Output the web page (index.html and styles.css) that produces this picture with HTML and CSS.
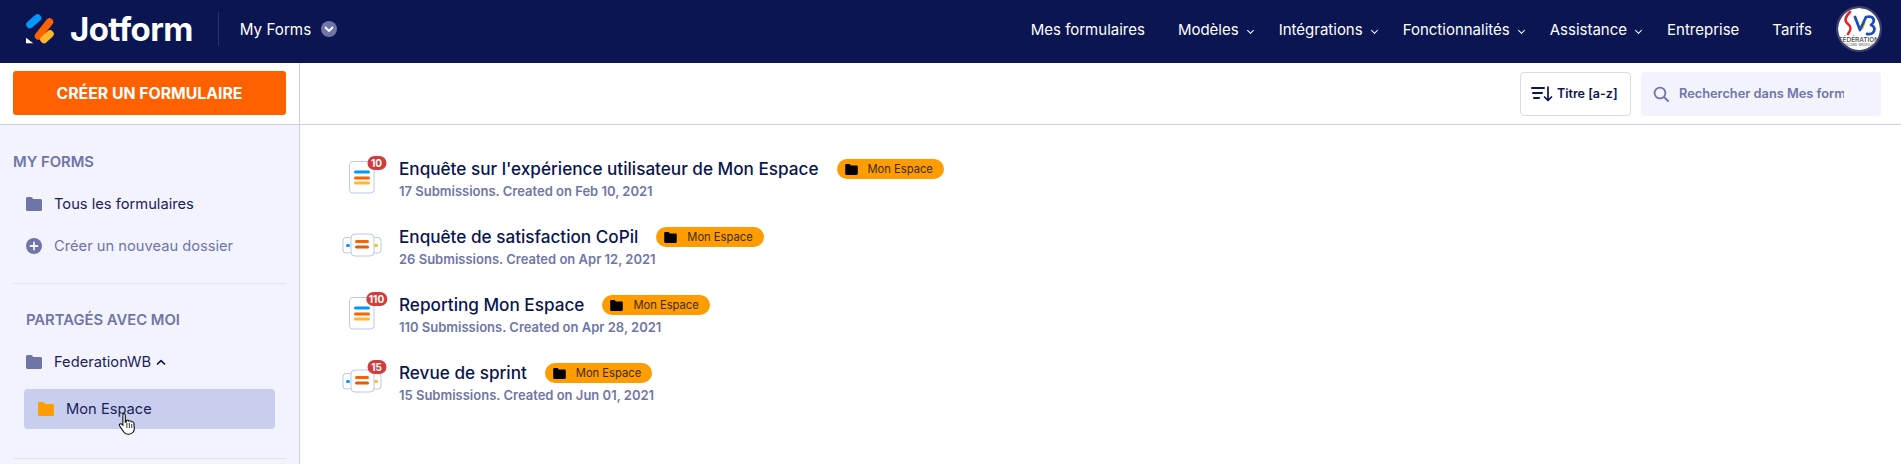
FILE: index.html
```html
<!DOCTYPE html>
<html lang="fr">
<head>
  <meta charset="UTF-8" />
  <title>My Forms - Jotform</title>
  <link rel="stylesheet" href="styles.css">
</head>
<body>

  <svg class="defs" width="0" height="0">
    <symbol id="folder" viewBox="0 0 16 14">
      <path d="M0 1.500C0 .7.7 0 1.500 0h3.400c.5 0 .9.2 1.200.6L7.200 2h7.300c.8 0 1.500.7 1.500 1.500v9c0 .8-.7 1.500-1.500 1.500h-13C.7 14 0 13.300 0 12.500z" fill="currentColor"/>
    </symbol>
    <symbol id="form-card" viewBox="0 0 36 36">
      <rect x="7.500" y=".5" width="24.500" height="31.500" rx="3.500" fill="#fff" stroke="#b9c8ea"/>
      <rect x="12" y="9.500" width="16" height="3" rx="1.500" fill="#0099ff"/>
      <rect x="12" y="15.500" width="16" height="3" rx="1.500" fill="#ff6100"/>
      <rect x="12" y="20.500" width="16" height="3" rx="1.500" fill="#ffb629"/>
    </symbol>
    <symbol id="form-cards" viewBox="0 0 40 30">
      <rect x="1" y="5.500" width="9" height="15.500" rx="3" fill="#fff" stroke="#b9c8ea"/>
      <rect x="30.500" y="5.500" width="8.500" height="15.500" rx="3" fill="#fff" stroke="#b9c8ea"/>
      <rect x="4" y="12" width="4" height="3" rx="1.500" fill="#0099ff"/>
      <rect x="32" y="12" width="4" height="3" rx="1.500" fill="#ffb629"/>
      <rect x="9" y="2" width="23" height="22" rx="4" fill="#fff" stroke="#b9c8ea"/>
      <rect x="13" y="8" width="14" height="3" rx="1.500" fill="#ff6100"/>
      <rect x="13" y="13.500" width="14" height="3" rx="1.500" fill="#e8590c"/>
    </symbol>
  </svg>

  <!-- Barre du haut -->
  <header class="topbar">
    <a class="logo">
      <svg class="logo-mark" width="28" height="31" viewBox="0 0 28 31">
        <g fill="none" stroke-width="7.500" stroke-linecap="round">
          <path d="M4 10.500 11.500 4" stroke="#0099ff"/>
          <path d="M12.500 22 23.500 8" stroke="#ff6100"/>
          <path d="M18 25.500 24 20" stroke="#ffb629"/>
        </g>
        <path d="M0 23.700v5.600h7.300z" fill="#fff"/>
      </svg>
      <span class="logo-text">Jotform</span>
    </a>
    <span class="topbar-sep"></span>
    <a class="myforms">My Forms</a>
    <span class="myforms-arrow">
      <svg width="10" height="7" viewBox="0 0 10 7"><path d="M1.500 1.500 5 5l3.500-3.500" fill="none" stroke="#fff" stroke-width="1.800" stroke-linecap="round" stroke-linejoin="round"/></svg>
    </span>

    <nav class="nav">
      <a class="nav-item">Mes formulaires</a>
      <a class="nav-item has-menu">Modèles</a>
      <a class="nav-item has-menu">Intégrations</a>
      <a class="nav-item has-menu">Fonctionnalités</a>
      <a class="nav-item has-menu">Assistance</a>
      <a class="nav-item">Entreprise</a>
      <a class="nav-item">Tarifs</a>
    </nav>

    <div class="avatar">
      <svg width="42" height="42" viewBox="0 0 42 42">
        <circle cx="21" cy="21" r="21" fill="#fff"/>
        <path d="M12 4C7 9 6 13 10 16c4 3 3 6 0 10" fill="none" stroke="#e0262c" stroke-width="2.600" stroke-linecap="round"/>
        <path d="M24 20l2-5" stroke="#f5c400" stroke-width="3" stroke-linecap="round"/>
        <path d="M17 9l5 13 6-13c8-2 10 4 5 8 6 2 4 10-4 9" fill="none" stroke="#1d4fb8" stroke-width="2.800" stroke-linecap="round" stroke-linejoin="round"/>
        <text x="21" y="33.500" text-anchor="middle" class="avatar-text">FÉDÉRATION</text>
        <text x="21" y="37.500" text-anchor="middle" class="avatar-sub">WALLONIE-BRUXELLES</text>
      </svg>
    </div>
  </header>

  <div class="page">
    <!-- Colonne de gauche -->
    <aside class="sidebar">
      <div class="create-box">
        <button class="create-btn">CRÉER UN FORMULAIRE</button>
      </div>

      <section class="side-section">
        <h3 class="side-title">MY FORMS</h3>
        <a class="side-item">
          <svg class="side-icon"><use href="#folder"/></svg>Tous les formulaires
        </a>
        <a class="side-item muted">
          <svg class="side-icon" viewBox="0 0 16 16"><circle cx="8" cy="8" r="8" fill="currentColor"/><path d="M8 4.500v7M4.500 8h7" stroke="#f3f3fe" stroke-width="1.800" stroke-linecap="round"/></svg>Créer un nouveau dossier
        </a>
      </section>

      <section class="side-section shared">
        <h3 class="side-title">PARTAGÉS AVEC MOI</h3>
        <a class="side-item parent">
          <svg class="side-icon"><use href="#folder"/></svg>FederationWB
          <svg class="side-chevron" width="10" height="7" viewBox="0 0 10 7"><path d="M1.500 5 5 1.700 8.500 5" fill="none" stroke="#0a1551" stroke-width="1.700" stroke-linecap="round" stroke-linejoin="round"/></svg>
        </a>
        <a class="side-item selected">
          <svg class="side-icon"><use href="#folder"/></svg>Mon Espace
          <svg class="hand" width="20" height="24" viewBox="0 0 18 24" preserveAspectRatio="none">
            <path d="M5 1.500c1 0 1.600.7 1.600 1.700v7l1-.4V8.500c1-.7 2-.3 2.200.6.900-.6 2-.2 2.200.8 1-.5 2.200 0 2.300 1.200l.4 5.200c.1 2.700-1.600 5.900-4.700 5.900H9c-2 0-3.200-1-4-2.500l-3.600-6c-.8-1.300.9-2.700 2-1.500l1 1.100V3.200c0-1 .6-1.700 1.600-1.700z" fill="#fff" stroke="#111" stroke-width="1"/>
            <path d="M8 11v5M10.200 11v5M12.400 12v4" stroke="#111" stroke-width=".8"/>
          </svg>
        </a>
      </section>
    </aside>

    <!-- Contenu principal -->
    <main class="main">
      <div class="toolbar">
        <button class="sort-btn">
          <svg width="22" height="18" viewBox="0 0 22 18"><path d="M1 3h12M2 8h9M3 13h5" stroke="#0a1551" stroke-width="2" stroke-linecap="round"/><path d="M17 2v13M13.500 12l3.500 3.500 3.500-3.500" fill="none" stroke="#0a1551" stroke-width="1.700" stroke-linecap="round" stroke-linejoin="round"/></svg>
          Titre [a-z]
        </button>
        <div class="search">
          <svg width="16" height="16" viewBox="0 0 16 16"><circle cx="7" cy="7" r="5.400" fill="none" stroke="#6f76a7" stroke-width="1.800"/><path d="m11 11 4 4" stroke="#6f76a7" stroke-width="1.800" stroke-linecap="round"/></svg>
          <input class="search-input" type="text" placeholder="Rechercher dans Mes formulaires">
        </div>
      </div>

      <ul class="form-list">
        <li class="form-row">
          <div class="form-icon"><svg class="icon-card"><use href="#form-card"/></svg><span class="badge">10</span></div>
          <div>
            <div class="form-head"><span class="form-title">Enquête sur l'expérience utilisateur de Mon Espace</span><span class="tag"><svg class="tag-icon"><use href="#folder"/></svg>Mon Espace</span></div>
            <div class="form-meta">17 Submissions. Created on Feb 10, 2021</div>
          </div>
        </li>
        <li class="form-row">
          <div class="form-icon"><svg class="icon-cards"><use href="#form-cards"/></svg></div>
          <div>
            <div class="form-head"><span class="form-title">Enquête de satisfaction CoPil</span><span class="tag"><svg class="tag-icon"><use href="#folder"/></svg>Mon Espace</span></div>
            <div class="form-meta">26 Submissions. Created on Apr 12, 2021</div>
          </div>
        </li>
        <li class="form-row">
          <div class="form-icon"><svg class="icon-card"><use href="#form-card"/></svg><span class="badge">110</span></div>
          <div>
            <div class="form-head"><span class="form-title">Reporting Mon Espace</span><span class="tag"><svg class="tag-icon"><use href="#folder"/></svg>Mon Espace</span></div>
            <div class="form-meta">110 Submissions. Created on Apr 28, 2021</div>
          </div>
        </li>
        <li class="form-row">
          <div class="form-icon"><svg class="icon-cards"><use href="#form-cards"/></svg><span class="badge">15</span></div>
          <div>
            <div class="form-head"><span class="form-title">Revue de sprint</span><span class="tag"><svg class="tag-icon"><use href="#folder"/></svg>Mon Espace</span></div>
            <div class="form-meta">15 Submissions. Created on Jun 01, 2021</div>
          </div>
        </li>
      </ul>
    </main>
  </div>

</body>
</html>
```

FILE: styles.css
```css
/* Estilos generales */
* {
  box-sizing: border-box;
}
html, body {
  height: 100%;
}
body {
  margin: 0;
  overflow: hidden;
  background: #fff;
  color: #0a1551;
  font-family: Inter, "Noto Sans", sans-serif;
}
.defs {
  display: block;
  height: 0;
}

/* Barre du haut */
.topbar {
  display: flex;
  align-items: center;
  height: 63px;
  padding: 0 0 5px 26px;
  background: #0a1551;
  color: #fff;
}
.logo {
  display: flex;
  align-items: center;
}
.logo-mark {
  display: block;
}
.logo-text {
  margin-left: 16px;
  font-size: 33px;
  font-weight: 700;
  letter-spacing: -0.6px;
}
.topbar-sep {
  width: 1px;
  height: 34px;
  margin-left: 25px;
  background: #29326b;
}
.myforms {
  margin-left: 21px;
  font-size: 15.200px;
}
.myforms-arrow {
  display: flex;
  justify-content: center;
  align-items: center;
  width: 16px;
  height: 16px;
  margin-left: 10px;
  border-radius: 50%;
  background: #6f76a7;
}
.nav {
  display: flex;
  align-items: center;
  margin-left: auto;
  font-size: 15px;
}
.nav-item {
  margin-left: 33px;
}
.nav-item.has-menu {
  position: relative;
  margin-right: 9px;
}
.nav-item.has-menu + .nav-item {
  margin-left: 31px;
}
.nav-item.has-menu::after {
  content: "";
  position: absolute;
  right: -14px;
  top: 8px;
  width: 4px;
  height: 4px;
  border-right: 1.300px solid #fff;
  border-bottom: 1.300px solid #fff;
  transform: rotate(45deg);
}
.avatar {
  overflow: hidden;
  width: 46px;
  height: 46px;
  margin: 0 19px 0 24px;
  padding: 2px;
  border-radius: 50%;
  background: #3d4270;
}
.avatar svg {
  display: block;
  border-radius: 50%;
}
.avatar-text {
  font-size: 6.500px;
  font-weight: 500;
  fill: #444;
}
.avatar-sub {
  font-size: 3px;
  font-weight: 600;
  fill: #777;
}

/* Disposition */
.page {
  display: flex;
  height: 401px;
}

/* Colonne de gauche */
.sidebar {
  flex: none;
  width: 300px;
  border-right: 1px solid #c8ceed;
  background: #f3f3fe;
}
.create-box {
  height: 62px;
  padding: 8px 13px 0;
  border-bottom: 1px solid #c8ceed;
  background: #fff;
}
.create-btn {
  display: block;
  width: 273px;
  height: 44px;
  border: none;
  border-radius: 3px;
  background: #ff6100;
  color: #fff;
  font-family: inherit;
  font-size: 15.800px;
  font-weight: 700;
}
.side-section {
  margin: 0 13px;
  padding-top: 28px;
  border-bottom: 1px solid #dfe2f3;
}
.side-section.shared {
  padding-top: 27px;
  padding-bottom: 29px;
}
.side-title {
  margin: 0 0 12px;
  color: #6f76a7;
  font-size: 14.800px;
  font-weight: 600;
  line-height: 18px;
}
.shared .side-title {
  margin-left: 13px;
  margin-bottom: 12px;
}
.side-item {
  display: flex;
  align-items: center;
  height: 42px;
  padding-left: 13px;
  font-size: 14.700px;
  color: #1c2257;
}
.side-item.muted {
  color: #6f76a7;
  margin-bottom: 16px;
}
.side-item.parent {
  margin-bottom: 6px;
}
.side-icon {
  flex: none;
  width: 16px;
  height: 14px;
  margin-right: 12px;
  color: #6f76a7;
}
.muted .side-icon {
  height: 16px;
}
.side-chevron {
  margin-left: 5px;
}
.side-item.selected {
  position: relative;
  width: 251px;
  height: 40px;
  margin-left: 11px;
  padding-left: 14px;
  border-radius: 4px;
  background: #c8ceed;
}
.selected .side-icon {
  color: #ff9d00;
}
.hand {
  position: absolute;
  left: 94px;
  top: 23px;
}

/* Contenu principal */
.main {
  flex: 1;
  min-width: 0;
}
.toolbar {
  display: flex;
  justify-content: flex-end;
  align-items: center;
  gap: 10px;
  height: 62px;
  padding: 0 20px 0 0;
  border-bottom: 1px solid #c8ceed;
}
.sort-btn {
  display: flex;
  align-items: center;
  gap: 4px;
  width: 111px;
  height: 44px;
  padding: 0 0 0 10px;
  border: 1px solid #dadcea;
  border-radius: 4px;
  background: #fff;
  color: #0a1551;
  font-family: inherit;
  font-size: 12.500px;
  font-weight: 600;
  white-space: nowrap;
}
.search {
  display: flex;
  align-items: center;
  gap: 10px;
  width: 240px;
  height: 44px;
  padding: 0 37px 0 12px;
  border-radius: 4px;
  background: #f3f3fe;
}
.search svg {
  flex: none;
}
.search-input {
  flex: 1;
  min-width: 0;
  padding: 0;
  border: none;
  background: transparent;
  font-family: inherit;
  font-size: 12.800px;
  font-weight: 600;
  outline: none;
}
.search-input::placeholder {
  color: #6f76a7;
  opacity: 1;
}

/* Liste des formulaires */
.form-list {
  margin: 0;
  padding: 19px 0 0 42px;
  list-style: none;
}
.form-row {
  display: flex;
  align-items: center;
  height: 68px;
}
.form-icon {
  position: relative;
  flex: none;
  width: 57px;
  height: 40px;
}
.icon-card {
  display: block;
  width: 36px;
  height: 36px;
  margin-top: 3px;
}
.icon-cards {
  display: block;
  width: 40px;
  height: 30px;
  margin-top: 6px;
}
.badge {
  position: absolute;
  left: 34.500px;
  top: -2px;
  min-width: 19px;
  padding: 0 3px;
  border-radius: 8px;
  background: #d13c3c;
  color: #fff;
  font-size: 10px;
  font-weight: 700;
  line-height: 14px;
  text-align: center;
  transform: translateX(-50%);
}
.form-head {
  display: flex;
  align-items: center;
}
.form-title {
  font-size: 17.150px;
  font-weight: 500;
  line-height: 24px;
}
.tag {
  display: flex;
  align-items: center;
  height: 20px;
  margin-left: 18px;
  padding: 0 11px 0 8px;
  border-radius: 10px;
  background: #ff9d00;
  color: #3b2a10;
  font-size: 11.200px;
}
.tag-icon {
  width: 13px;
  height: 11px;
  margin-right: 10px;
  color: #000;
}
.form-meta {
  margin-top: 2px;
  color: #6f76a7;
  font-size: 13px;
  font-weight: 600;
  line-height: 16px;
}
```
